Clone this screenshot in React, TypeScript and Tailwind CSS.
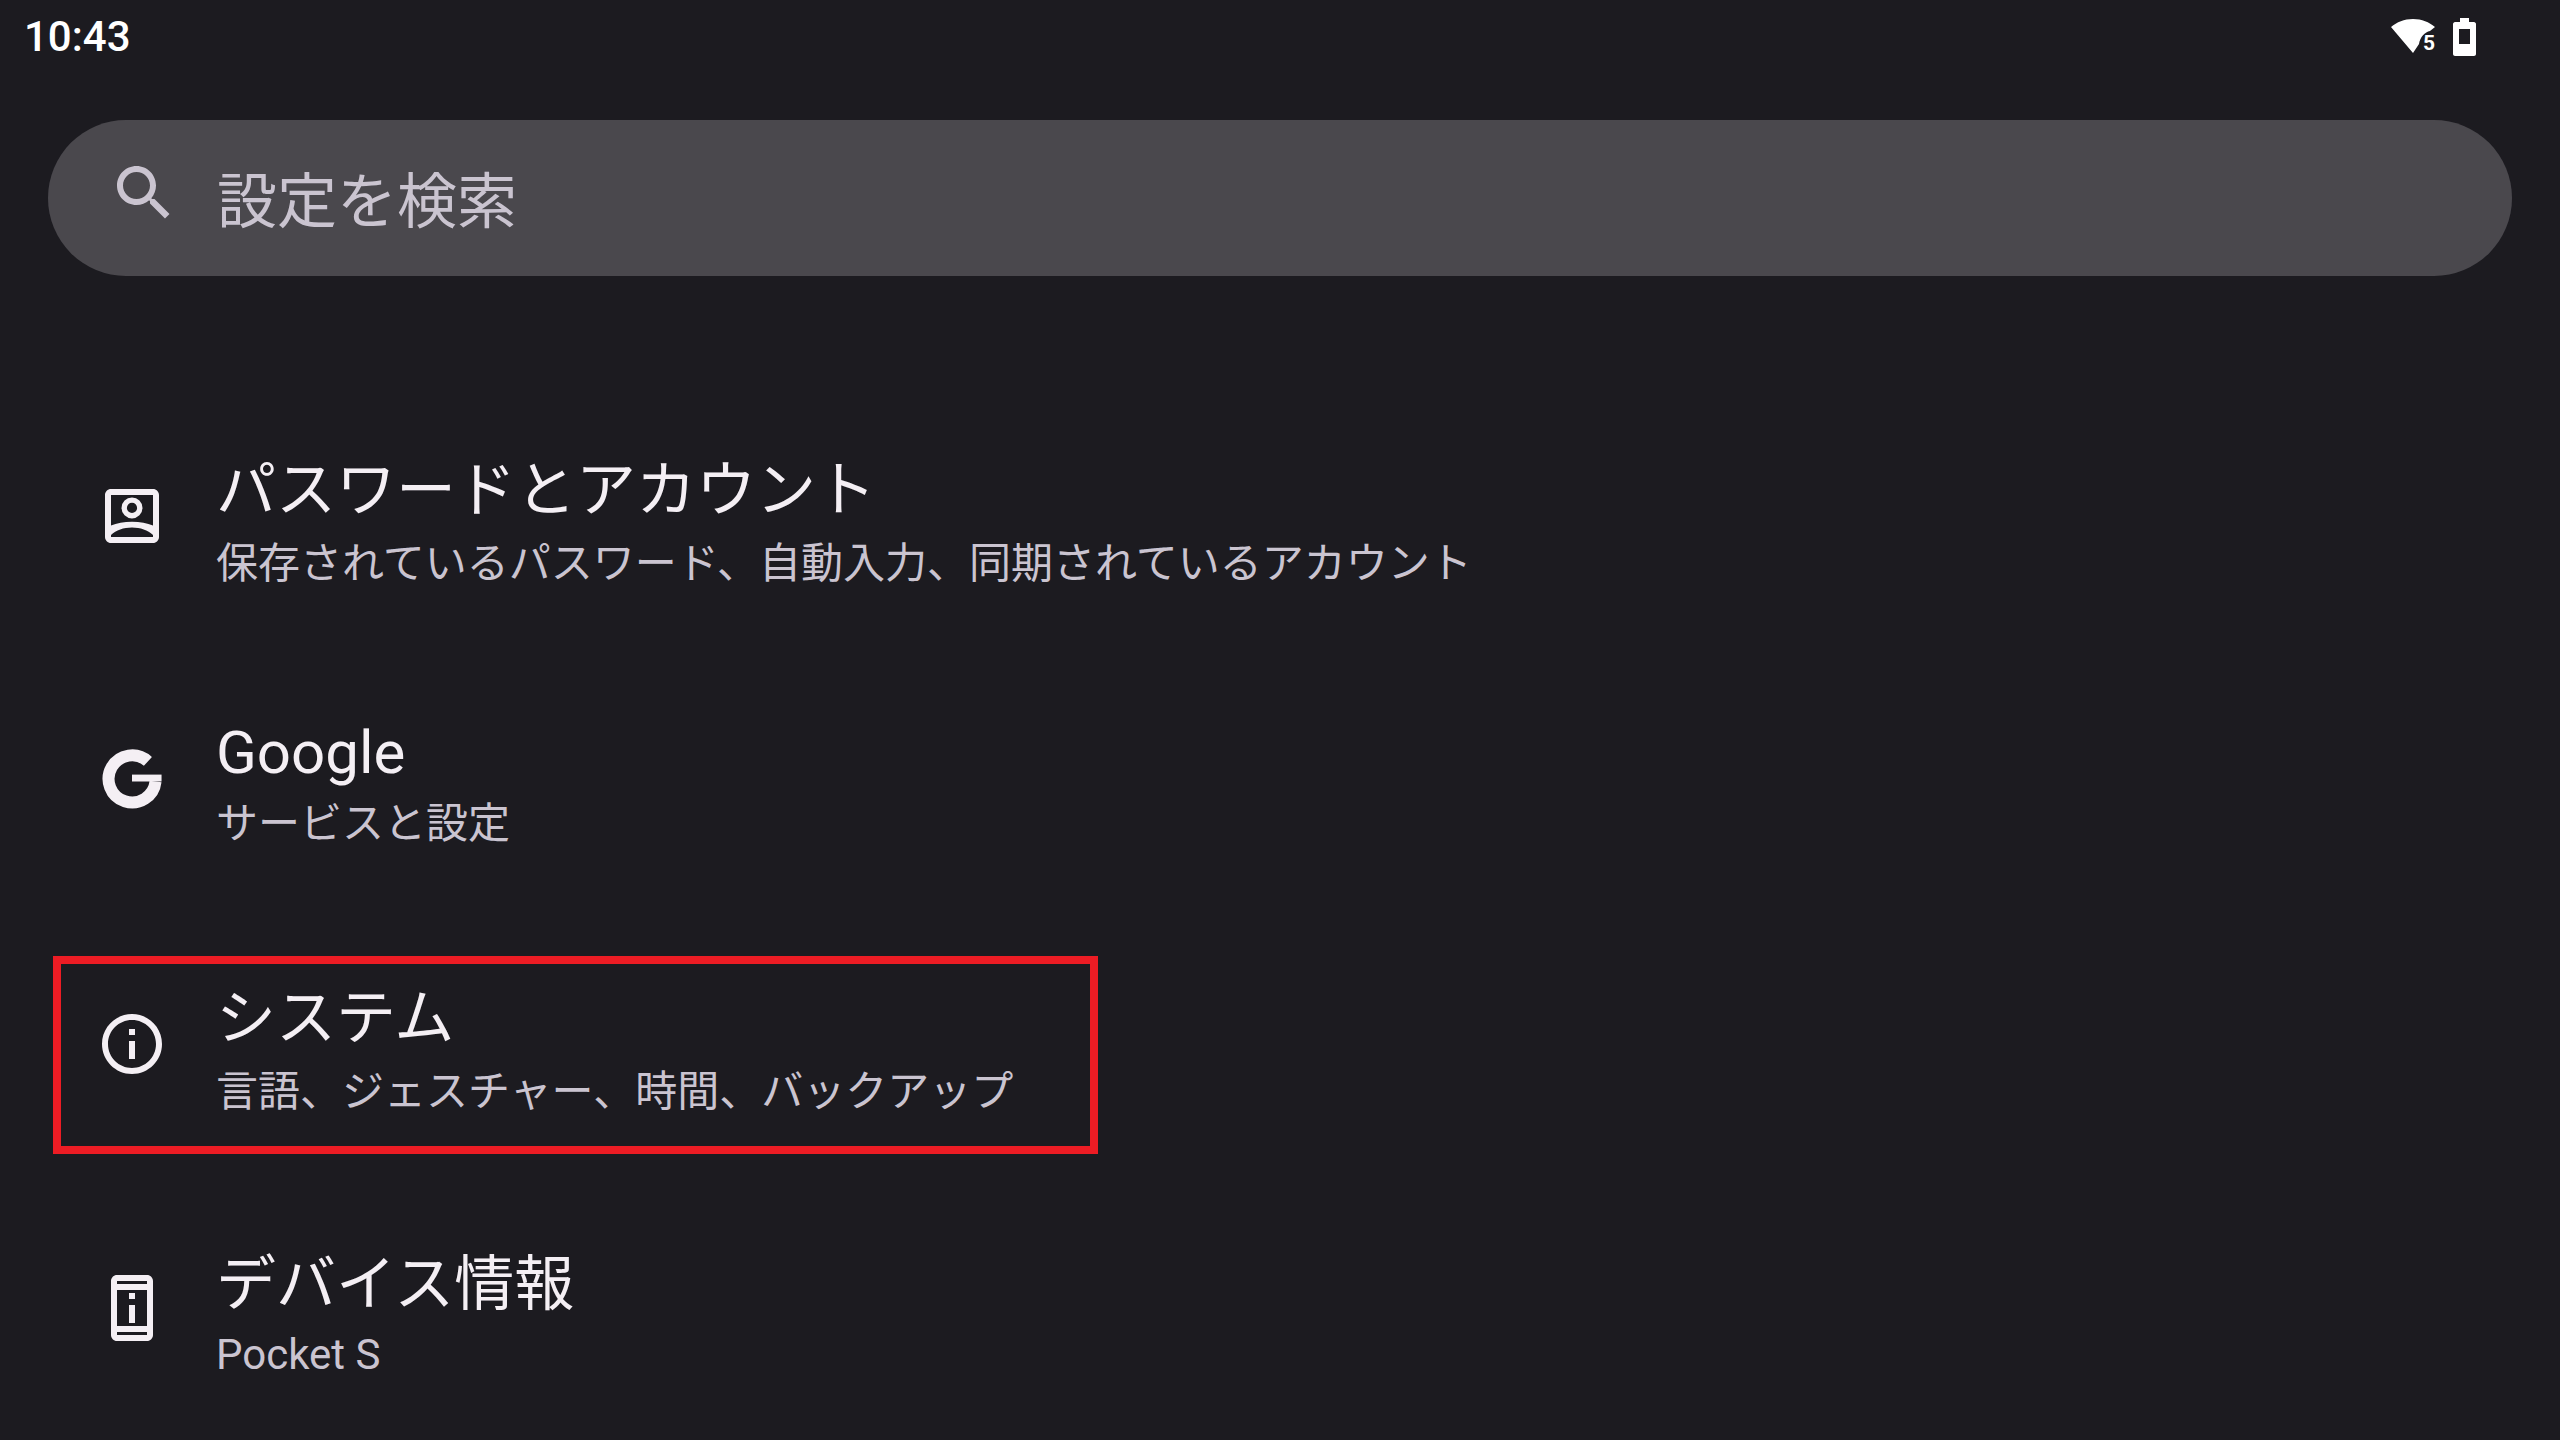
const cjk = "font-['Roboto','Noto_Sans_CJK_JP',sans-serif]";

function AccountIcon() {
  return (
    <svg viewBox="0 0 24 24" className="w-[72px] h-[72px]" fill="#f4eff4">
      <path d="M3 5v14c0 1.100.89 2 2 2h14c1.100 0 2-.9 2-2V5c0-1.100-.9-2-2-2H5c-1.110 0-2 .9-2 2zm16 14H5V5h14v14z" />
      <path fillRule="evenodd" d="M12 5.800a3.500 3.500 0 1 1 0 7 3.500 3.500 0 0 1 0-7zm0 1.800a1.700 1.700 0 1 0 0 3.400 1.700 1.700 0 0 0 0-3.400z" />
      <path d="M5 15.200C6.900 14.300 9.300 13.900 12 13.900s5.100.4 7 1.300v3.100C17.300 16.700 14.800 15.800 12 15.800s-5.300.9-7 2.500z" />
    </svg>
  );
}

function GoogleIcon() {
  return (
    <svg viewBox="0 0 24 24" className="w-[72px] h-[72px]" fill="#f4eff4">
      <path d="M17.300 5.800A7.850 7.850 0 1 0 19.850 12.500" fill="none" stroke="#f4eff4" strokeWidth="4" />
      <path d="M12 10.200h9.850v2.300H12z" />
    </svg>
  );
}

function InfoIcon() {
  return (
    <svg viewBox="0 0 24 24" className="w-[72px] h-[72px]" fill="#f4eff4">
      <path d="M11 7h2v2h-2zm0 4h2v6h-2z" />
      <path d="M12 2C6.480 2 2 6.480 2 12s4.480 10 10 10 10-4.480 10-10S17.520 2 12 2zm0 18c-4.410 0-8-3.590-8-8s3.590-8 8-8 8 3.590 8 8-3.590 8-8 8z" />
    </svg>
  );
}

function DeviceInfoIcon() {
  return (
    <svg viewBox="0 0 24 24" className="w-[72px] h-[72px]" fill="#f4eff4">
      <path d="M11 7h2v2h-2zm0 4h2v6h-2z" />
      <path d="M17 1H7c-1.100 0-2 .9-2 2v18c0 1.100.9 2 2 2h10c1.100 0 2-.9 2-2V3c0-1.100-.9-2-2-2zm0 20H7v-1h10v1zm0-3H7V6h10v12zm0-14H7V3h10v1z" />
    </svg>
  );
}

const rows = [
  { title: "パスワードとアカウント", sub: "保存されているパスワード、自動入力、同期されているアカウント", icon: <AccountIcon />, textClass: "pt-[14px]", subClass: "mt-[8px]" },
  { title: "Google", sub: "サービスと設定", icon: <GoogleIcon />, textClass: "pt-[8px]", subClass: "mt-[6px]" },
  { title: "システム", sub: "言語、ジェスチャー、時間、バックアップ", icon: <InfoIcon />, textClass: "pt-[14px]", subClass: "mt-[8px]" },
  { title: "デバイス情報", sub: "Pocket S", icon: <DeviceInfoIcon />, textClass: "pt-[14px]", subClass: "mt-[5px]" },
];

export default function App() {
  return (
    <div className={`relative w-[2560px] h-[1440px] overflow-hidden bg-[#1c1b20] ${cjk}`}>
      {/* Status bar */}
      <div className="flex items-center justify-between h-[74px] pl-[24px] pr-[84px]">
        <span className="text-[42px] leading-[74px] font-medium text-white">10:43</span>
        <div className="flex items-center gap-[18px]">
          <svg viewBox="0 0 44 36" className="w-[44px] h-[36px]" fill="#fff">
            <path d="M22 34 0 8C6 3 13 0 22 0s16 3 22 8l-5 4c-5 1-10 6-11 13z" />
            <text x="32" y="31" fontSize="21" fontWeight="700" fontFamily="Roboto">5</text>
          </svg>
          <svg viewBox="0 0 23 38" className="w-[23px] h-[38px]" fill="#fff">
            <path fillRule="evenodd" d="M7 0h9v4h5c1 0 2 1 2 2v30c0 1-1 2-2 2H2c-1 0-2-1-2-2V6c0-1 1-2 2-2h5zM6 11v15h11V11z" />
          </svg>
        </div>
      </div>

      {/* Search */}
      <div className="flex items-center h-[156px] mt-[46px] ml-[48px] mr-[48px] rounded-full bg-[#4a484d] pl-[60px]">
        <svg viewBox="0 0 24 24" className="w-[72px] h-[72px] mt-[-11px]" fill="#cac4d0">
          <path d="M15.500 14h-.79l-.28-.27C15.410 12.590 16 11.110 16 9.500 16 5.910 13.090 3 9.500 3S3 5.910 3 9.500 5.910 16 9.500 16c1.610 0 3.090-.59 4.230-1.570l.27.28v.79l5 4.990L20.490 19l-4.990-5zm-6 0C7.010 14 5 11.990 5 9.500S7.010 5 9.500 5 14 7.010 14 9.500 11.990 14 9.500 14z" />
        </svg>
        <span className="ml-[37px] text-[60px] leading-none text-[#cac4d0] mt-[10px]">設定を検索</span>
      </div>

      {/* Rows */}
      <div className="mt-[108px] flex flex-col">
        {rows.map((row) => (
          <div key={row.title} className="flex items-center h-[264px] pl-[96px]">
            <div className="flex items-center w-[120px] shrink-0">{row.icon}</div>
            <div className={`flex flex-col ${row.textClass}`}>
              <span className="text-[60px] leading-[74px] text-[#f4eff4]">{row.title}</span>
              <span className={`text-[42px] leading-[56px] text-[#cac4d0] ${row.subClass}`}>{row.sub}</span>
            </div>
          </div>
        ))}
      </div>

      {/* Highlight box */}
      <div className="absolute left-[53px] top-[956px] w-[1045px] h-[198px] border-[8px] border-[#ed1c24]" />
    </div>
  );
}
